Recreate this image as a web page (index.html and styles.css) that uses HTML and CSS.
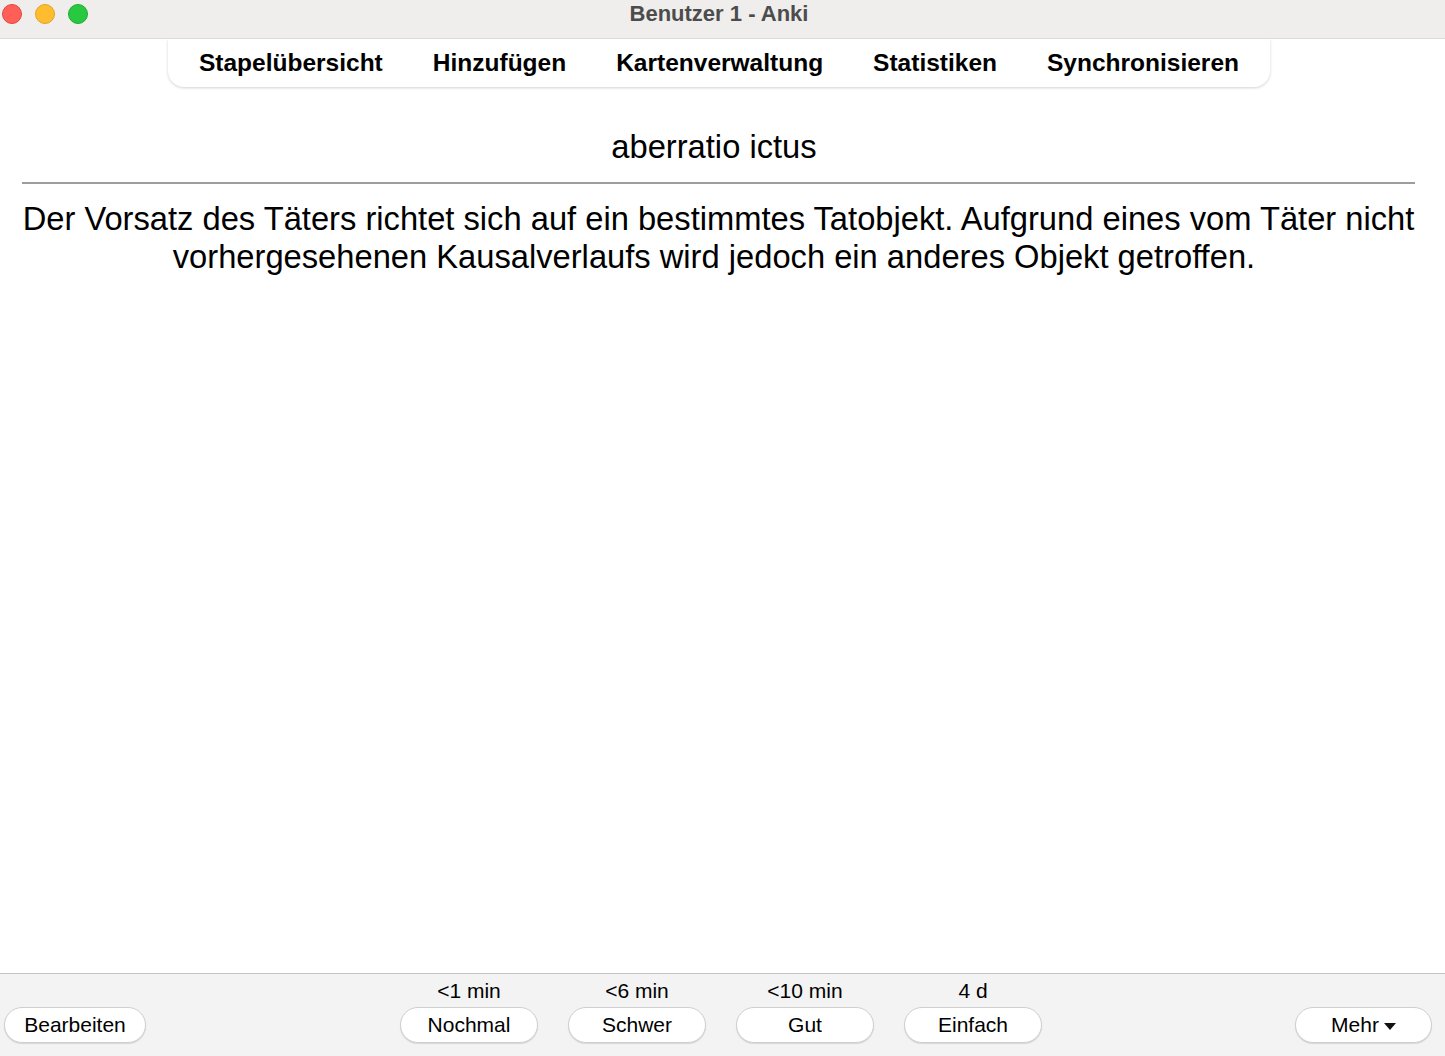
FILE: index.html
```html
<!DOCTYPE html>
<html lang="de">
<head>
<meta charset="utf-8">
<title>Benutzer 1 - Anki</title>
<link rel="stylesheet" href="styles.css">
</head>
<body>
<div class="window">
  <header class="titlebar">
    <div class="lights">
      <span class="light red"></span>
      <span class="light yellow"></span>
      <span class="light green"></span>
    </div>
    <div class="title">Benutzer 1 - Anki</div>
  </header>

  <div class="toolbar-wrap">
    <nav class="toolbar">
      <span class="tb-item">Stapelübersicht</span>
      <span class="tb-item">Hinzufügen</span>
      <span class="tb-item">Kartenverwaltung</span>
      <span class="tb-item">Statistiken</span>
      <span class="tb-item">Synchronisieren</span>
    </nav>
  </div>

  <main class="card">
    <div class="front">aberratio ictus&nbsp;</div>
    <hr class="answer-rule">
    <div class="back">Der Vorsatz des Täters richtet sich auf ein bestimmtes Tatobjekt. Aufgrund eines vom Täter nicht vorhergesehenen Kausalverlaufs wird jedoch ein anderes Objekt getroffen.&nbsp;</div>
  </main>

  <footer class="bottombar">
    <div class="side left">
      <button class="btn btn-edit">Bearbeiten</button>
    </div>
    <div class="answers">
      <div class="ans">
        <span class="due">&lt;1 min</span>
        <button class="btn btn-ans">Nochmal</button>
      </div>
      <div class="ans">
        <span class="due">&lt;6 min</span>
        <button class="btn btn-ans">Schwer</button>
      </div>
      <div class="ans">
        <span class="due">&lt;10 min</span>
        <button class="btn btn-ans">Gut</button>
      </div>
      <div class="ans">
        <span class="due">4 d</span>
        <button class="btn btn-ans">Einfach</button>
      </div>
    </div>
    <div class="side right">
      <button class="btn btn-more">Mehr <svg class="caret" width="12" height="7" viewBox="0 0 12 7"><path d="M0 0 H12 L6 7 Z" fill="#111"/></svg></button>
    </div>
  </footer>
</div>
</body>
</html>
```

FILE: styles.css
```css
* { box-sizing: border-box; }

html, body {
  margin: 0;
  padding: 0;
  height: 100%;
  background: #ffffff;
  font-family: "Liberation Sans", Arial, Helvetica, sans-serif;
  color: #000;
}

.window {
  height: 1056px;
  display: flex;
  flex-direction: column;
  overflow: hidden;
}

/* ---------- title bar ---------- */
.titlebar {
  position: relative;
  height: 39px;
  flex: 0 0 39px;
  background: #efeeed;
  border-bottom: 1px solid #dcdbda;
  display: flex;
  justify-content: center;
  padding-right: 7px;
}

.lights {
  position: absolute;
  left: 2px;
  top: 4px;
  display: flex;
  gap: 13px;
}

.light {
  width: 20px;
  height: 20px;
  border-radius: 50%;
  display: block;
}
.light.red { background: #fe5f57; border: 1px solid #e2463f; }
.light.yellow { background: #febc2e; border: 1px solid #e1a325; }
.light.green { background: #28c840; border: 1px solid #1dad2b; }

.title {
  font-weight: bold;
  font-size: 22px;
  color: #4c4c4c;
  padding-top: 1px;
}

/* ---------- toolbar ---------- */
.toolbar-wrap {
  display: flex;
  justify-content: center;
  padding-right: 7px;
}

.toolbar {
  display: flex;
  align-items: center;
  height: 48px;
  padding: 0 6px;
  background: #ffffff;
  border-radius: 0 0 16px 16px;
  box-shadow: 0 1px 3px rgba(0, 0, 0, 0.18);
}

.tb-item {
  padding: 0 25px;
  font-weight: bold;
  font-size: 24.5px;
  color: #000;
}

/* ---------- card ---------- */
.card {
  flex: 1 1 auto;
  margin: 0 30px 0 22px;
  padding-top: 41px;
  text-align: center;
  font-size: 32.7px;
  line-height: normal;
}

.answer-rule {
  margin: 16px 0;
  height: 0;
  border: 0;
  border-top: 2px solid #9d9d9d;
}

/* ---------- bottom bar ---------- */
.bottombar {
  flex: 0 0 83px;
  height: 83px;
  background: #f3f3f3;
  border-top: 1px solid #c4c4c4;
  display: grid;
  grid-template-columns: 1fr auto 1fr;
  align-items: end;
  padding: 5px 3px 13px 0;
}

.side { display: flex; }
.side.left { justify-content: flex-start; padding-left: 4px; }
.side.right { justify-content: flex-end; padding-right: 10px; }

.answers {
  display: flex;
  gap: 30px;
}

.ans {
  display: flex;
  flex-direction: column;
  align-items: center;
  gap: 4px;
}

.due {
  font-size: 21px;
  line-height: 24px;
  color: #000;
}

.btn {
  font-family: "Liberation Sans", Arial, Helvetica, sans-serif;
  font-size: 21px;
  line-height: 24px;
  color: #000;
  background: #ffffff;
  border: 1px solid #cfcfcf;
  border-radius: 18px;
  padding: 5px 0;
  height: 36px;
  box-shadow: 0 1px 1px rgba(0, 0, 0, 0.12);
  cursor: pointer;
}

.btn-ans { width: 138px; }
.btn-edit { width: 142px; }
.btn-more {
  width: 137px;
  display: flex;
  align-items: center;
  justify-content: center;
  gap: 5px;
}

.caret { display: block; margin-top: 3px; }
```
